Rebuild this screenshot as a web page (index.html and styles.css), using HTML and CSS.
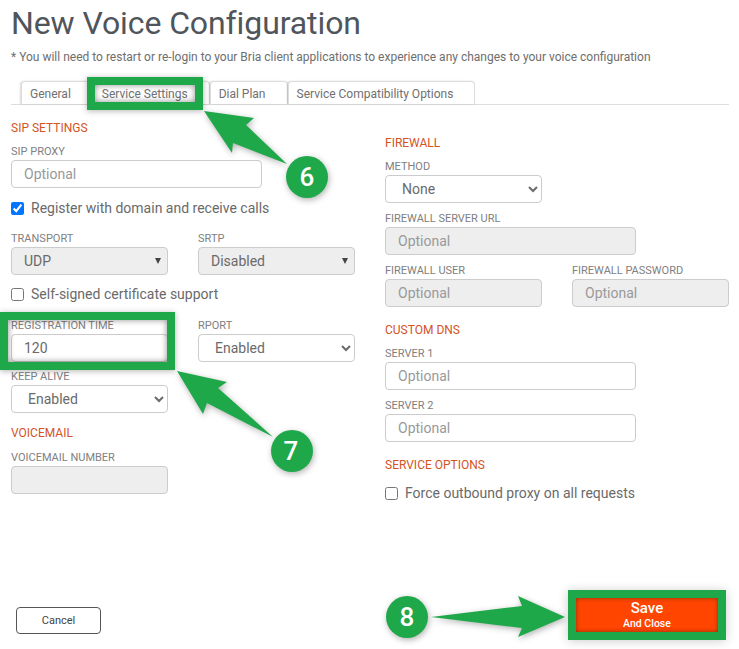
FILE: index.html
```html
<!DOCTYPE html>
<html lang="en">
<head>
<meta charset="utf-8">
<title>New Voice Configuration</title>
<link rel="stylesheet" href="styles.css">
</head>
<body>
<div class="page">
  <h1 class="title">New Voice Configuration</h1>
  <p class="note">* You will need to restart or re-login to your Bria client applications to experience any changes to your voice configuration</p>
  <nav class="tabs">
    <a class="tab">General</a>
    <a class="tab">Service Settings</a>
    <a class="tab">Dial Plan</a>
    <a class="tab">Service Compatibility Options</a>
  </nav>
  <div class="columns">
    <section class="col col-left">
      <h2 class="heading">SIP SETTINGS</h2>
      <div class="field mt-9 w-wide">
        <label class="label">SIP PROXY</label>
        <input class="input" placeholder="Optional">
      </div>
      <label class="check mt-10"><input type="checkbox" checked>Register with domain and receive calls</label>
      <div class="row mt-13">
        <div class="field">
          <label class="label">TRANSPORT</label>
          <div class="locked">UDP</div>
        </div>
        <div class="field">
          <label class="label">SRTP</label>
          <div class="locked">Disabled</div>
        </div>
      </div>
      <label class="check mt-9"><input type="checkbox">Self-signed certificate support</label>
      <div class="row mt-14">
        <div class="field">
          <label class="label">REGISTRATION TIME</label>
          <input class="input" value="120">
        </div>
        <div class="field">
          <label class="label">RPORT</label>
          <select class="select"><option>Enabled</option></select>
        </div>
      </div>
      <div class="field mt-7 w-narrow">
        <label class="label">KEEP ALIVE</label>
        <select class="select"><option>Enabled</option></select>
      </div>
      <h2 class="heading mt-13">VOICEMAIL</h2>
      <div class="field mt-10 w-narrow">
        <label class="label">VOICEMAIL NUMBER</label>
        <input class="input" disabled>
      </div>
    </section>
    <section class="col">
      <h2 class="heading mt-15">FIREWALL</h2>
      <div class="field mt-9 w-narrow">
        <label class="label">METHOD</label>
        <select class="select"><option>None</option></select>
      </div>
      <div class="field mt-8 w-wide">
        <label class="label">FIREWALL SERVER URL</label>
        <input class="input" placeholder="Optional" disabled>
      </div>
      <div class="row mt-8">
        <div class="field">
          <label class="label">FIREWALL USER</label>
          <input class="input" placeholder="Optional" disabled>
        </div>
        <div class="field">
          <label class="label">FIREWALL PASSWORD</label>
          <input class="input" placeholder="Optional" disabled>
        </div>
      </div>
      <h2 class="heading heading-low mt-15">CUSTOM DNS</h2>
      <div class="field mt-10 w-wide">
        <label class="label">SERVER 1</label>
        <input class="input" placeholder="Optional">
      </div>
      <div class="field mt-8 w-wide">
        <label class="label">SERVER 2</label>
        <input class="input" placeholder="Optional">
      </div>
      <h2 class="heading heading-low mt-15">SERVICE OPTIONS</h2>
      <label class="check mt-12"><input type="checkbox">Force outbound proxy on all requests</label>
    </section>
  </div>
  <footer class="footer">
    <button class="cancel">Cancel</button>
    <button class="save"><span class="save-main">Save</span><span class="save-sub">And Close</span></button>
  </footer>
</div>
<div class="mark mark-tab"></div>
<div class="mark mark-reg"></div>
<svg class="callouts" width="739" height="649" viewBox="0 0 739 649">
  <g class="callout">
    <polygon points="204,111 254,118 246,125 287,164 233,143 232,153"/>
    <circle cx="307" cy="177" r="21"/>
  </g>
  <g class="callout">
    <polygon points="177,371 227,382 218,388 273,437 207,403 203,414"/>
    <circle cx="292" cy="451" r="21"/>
  </g>
  <g class="callout">
    <polygon points="431,617 522,606 518,596 565,617 518,637 522,628"/>
    <circle cx="407" cy="617" r="21"/>
  </g>
  <text class="num" x="307" y="186">6</text>
  <text class="num" x="291" y="460">7</text>
  <text class="num" x="407" y="626">8</text>
</svg>
</body>
</html>
```
FILE: styles.css
```css
* { box-sizing: border-box; }
html, body { margin: 0; padding: 0; background: #fff; }
body {
  position: relative;
  width: 739px;
  height: 649px;
  overflow: hidden;
  font-family: Roboto, "Liberation Sans", sans-serif;
  color: #666;
}
.page { padding: 0 10px 0 11px; }
.title {
  margin: 0;
  height: 47px;
  font-size: 32px;
  line-height: 47px;
  font-weight: 400;
  letter-spacing: -0.1px;
  color: #50555b;
}
.note {
  margin: 2px 0 0;
  height: 16px;
  font-size: 12px;
  line-height: 16px;
  color: #6e6e6e;
}
.tabs {
  display: flex;
  height: 24px;
  margin-top: 16px;
  padding-left: 10px;
  border-bottom: 1px solid #ddd;
}
.tab {
  height: 23px;
  padding: 0 21px 0 8px;
  font-size: 12px;
  line-height: 24px;
  color: #707070;
  background: #fff;
  border: 1px solid #ddd;
  border-bottom: 0;
  border-radius: 4px 4px 0 0;
  box-shadow: -1px 0 2px rgba(0,0,0,.15);
}
.columns {
  display: flex;
  height: 493px;
  padding-top: 16px;
}
.col { width: 344px; }
.col-left { margin-right: 30px; }
.heading {
  margin: 0;
  height: 14px;
  font-size: 12px;
  line-height: 14px;
  font-weight: 400;
  color: #d4531f;
}
.heading-low { line-height: 16px; }
.field { display: flex; flex-direction: column; }
.label {
  height: 14px;
  margin-bottom: 2px;
  font-size: 11px;
  line-height: 16px;
  color: #808080;
}
.input, .select, .locked {
  width: 100%;
  height: 28px;
  font-family: inherit;
  font-size: 14px;
  color: #6a6a6a;
  border: 1px solid #ccc;
  border-radius: 4px;
  background: #fff;
  outline: 0;
}
.input { padding: 0 12px; }
.input::placeholder { color: #999; opacity: 1; }
.input:disabled { background: #eee; }
.select { padding: 0 0 0 12px; }
.locked {
  position: relative;
  padding: 0 12px;
  line-height: 26px;
  background: #eee;
}
.locked::after {
  content: "";
  position: absolute;
  top: 10px;
  right: 6px;
  border-left: 3.5px solid transparent;
  border-right: 3.5px solid transparent;
  border-top: 6px solid #444;
}
.check {
  display: flex;
  align-items: center;
  height: 20px;
  font-size: 14px;
  color: #6a6a6a;
}
.check input {
  width: 13px;
  height: 13px;
  margin: 1px 7px 0 0;
  flex: none;
}
.row {
  display: grid;
  grid-template-columns: 157px 157px;
  column-gap: 30px;
}
.w-wide { width: 251px; }
.w-narrow { width: 157px; }
.mt-7 { margin-top: 7px; }
.mt-8 { margin-top: 8px; }
.mt-9 { margin-top: 9px; }
.mt-10 { margin-top: 10px; }
.mt-12 { margin-top: 12px; }
.mt-13 { margin-top: 13px; }
.mt-14 { margin-top: 14px; }
.mt-15 { margin-top: 15px; }
.footer {
  display: flex;
  justify-content: space-between;
  align-items: flex-start;
  padding: 0 11px 0 5px;
}
.cancel {
  width: 85px;
  height: 27px;
  margin-top: 9px;
  padding: 0;
  font-family: inherit;
  font-size: 11px;
  color: #444;
  background: #fff;
  border: 1px solid #555;
  border-radius: 4px;
}
.save {
  display: flex;
  flex-direction: column;
  align-items: center;
  width: 142px;
  height: 34px;
  padding: 2px 0 0;
  color: #fff;
  font-family: inherit;
  background: #ff4500;
  border: 0;
  box-shadow: inset 0 0 4px rgba(90,40,0,.75), 0 0 0 8px #1fa84a, 0 1px 10px 8px rgba(0,0,0,.2);
}
.save-main { font-size: 15px; line-height: 17px; font-weight: 500; }
.save-sub { font-size: 10.5px; line-height: 13px; font-weight: 500; }
.mark {
  position: absolute;
  border: 8px solid #1fa84a;
  box-shadow: 0 1px 6px rgba(0,0,0,.3), inset 0 0 6px rgba(0,0,0,.45);
}
.mark-tab { left: 87px; top: 77px; width: 116px; height: 33px; }
.mark-reg { left: 0; top: 312px; width: 175px; height: 58px; }
.callouts { position: absolute; left: 0; top: 0; }
.callout {
  fill: #1fa84a;
  filter: drop-shadow(1px 2px 3px rgba(0,0,0,.3));
}
.num {
  font-family: Roboto, "Liberation Sans", sans-serif;
  font-size: 26px;
  font-weight: 500;
  fill: #fff;
  text-anchor: middle;
}
```
